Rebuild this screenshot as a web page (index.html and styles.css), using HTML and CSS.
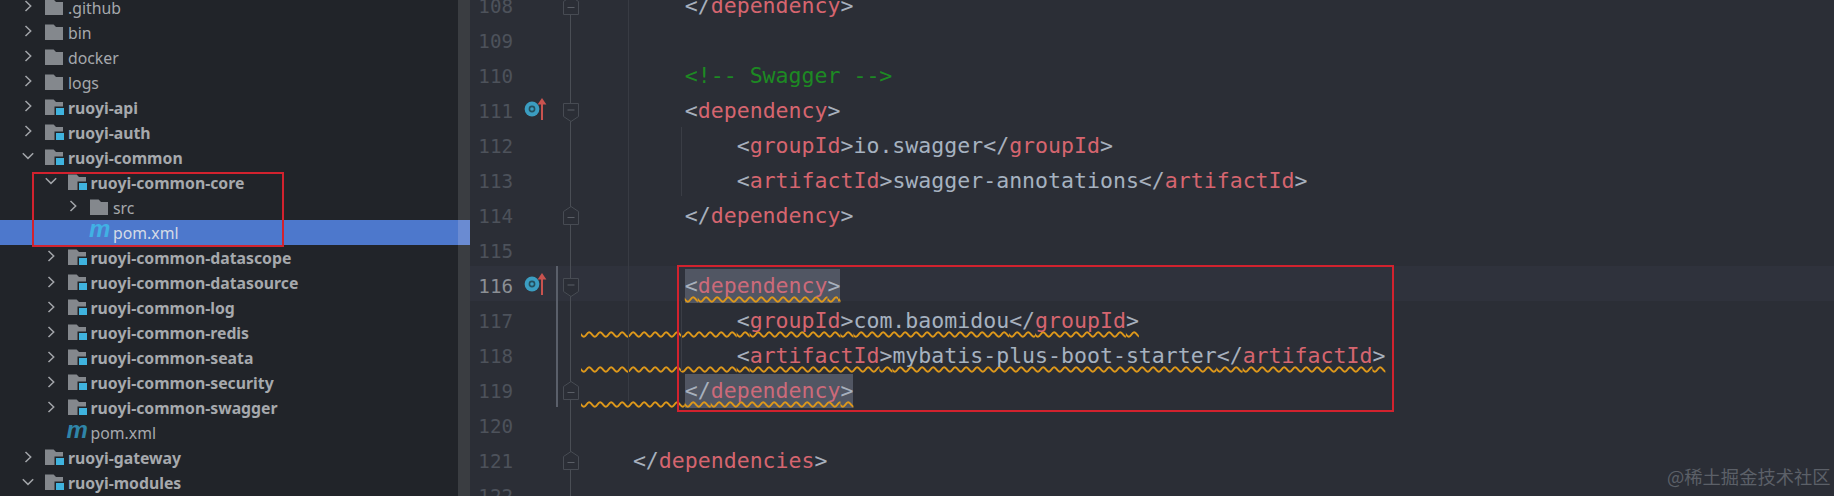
FILE: index.html
```html
<!DOCTYPE html>
<html lang="en">
<head>
<meta charset="utf-8">
<title>ruoyi-common-core pom.xml</title>
<link rel="stylesheet" href="styles.css">
</head>
<body>
<svg class="defs" width="0" height="0" aria-hidden="true">
  <symbol id="folder" viewBox="0 0 20 18"><path d="M1 2.5h8.6l2.4 2.5h7v13H1z" fill="#84888d"/></symbol>
  <symbol id="module" viewBox="0 0 20 18"><path d="M1 2.5h8.6l2.4 2.5h7v13H1z" fill="#84888d"/><rect x="10.5" y="9.5" width="10" height="10" fill="#212429"/><rect x="12" y="11" width="8" height="8" fill="#3fb3de"/></symbol>
  <symbol id="right" viewBox="0 0 12 12"><path d="M3.5 1l5.2 5-5.2 5" fill="none" stroke="#a2a5a9" stroke-width="1.5"/></symbol>
  <symbol id="down" viewBox="0 0 12 12"><path d="M.8 3.2l5.2 5.2 5.2-5.2" fill="none" stroke="#a2a5a9" stroke-width="1.5"/></symbol>
  <symbol id="fstart" viewBox="0 0 16 19"><path d="M.5.5h15v13L8 18.5.5 13.5z" fill="#2b2e36" stroke="#474b53"/><path d="M4.5 7h7" stroke="#5a5e66"/></symbol>
  <symbol id="fend" viewBox="0 0 16 19"><path d="M.5 18.5h15v-13L8 .5.5 5.5z" fill="#2b2e36" stroke="#474b53"/><path d="M4.5 11.5h7" stroke="#5a5e66"/></symbol>
  <symbol id="impl" viewBox="0 0 26 24"><circle cx="8" cy="12" r="7.4" fill="#3b9dc1"/><circle cx="8" cy="12" r="2.6" fill="none" stroke="#24505f" stroke-width="1.6"/><path d="M18 23V4" stroke="#c9534f" stroke-width="2"/><path d="M13.6 7.5L18 1l4.4 6.5z" fill="#c9534f"/></symbol>
</svg>
<main class="app">
  <aside class="tree">
    <div class="row d0"><svg class="chev"><use href="#right"/></svg><svg class="ico"><use href="#folder"/></svg><span>.github</span></div>
    <div class="row d0"><svg class="chev"><use href="#right"/></svg><svg class="ico"><use href="#folder"/></svg><span>bin</span></div>
    <div class="row d0"><svg class="chev"><use href="#right"/></svg><svg class="ico"><use href="#folder"/></svg><span>docker</span></div>
    <div class="row d0"><svg class="chev"><use href="#right"/></svg><svg class="ico"><use href="#folder"/></svg><span>logs</span></div>
    <div class="row d0 mod"><svg class="chev"><use href="#right"/></svg><svg class="ico"><use href="#module"/></svg><span>ruoyi-api</span></div>
    <div class="row d0 mod"><svg class="chev"><use href="#right"/></svg><svg class="ico"><use href="#module"/></svg><span>ruoyi-auth</span></div>
    <div class="row d0 mod"><svg class="chev"><use href="#down"/></svg><svg class="ico"><use href="#module"/></svg><span>ruoyi-common</span></div>
    <div class="row d1 mod"><svg class="chev"><use href="#down"/></svg><svg class="ico"><use href="#module"/></svg><span>ruoyi-common-core</span></div>
    <div class="row d2"><svg class="chev"><use href="#right"/></svg><svg class="ico"><use href="#folder"/></svg><span>src</span></div>
    <div class="row d2 sel"><i class="chev"></i><i class="mvn">m</i><span>pom.xml</span></div>
    <div class="row d1 mod"><svg class="chev"><use href="#right"/></svg><svg class="ico"><use href="#module"/></svg><span>ruoyi-common-datascope</span></div>
    <div class="row d1 mod"><svg class="chev"><use href="#right"/></svg><svg class="ico"><use href="#module"/></svg><span>ruoyi-common-datasource</span></div>
    <div class="row d1 mod"><svg class="chev"><use href="#right"/></svg><svg class="ico"><use href="#module"/></svg><span>ruoyi-common-log</span></div>
    <div class="row d1 mod"><svg class="chev"><use href="#right"/></svg><svg class="ico"><use href="#module"/></svg><span>ruoyi-common-redis</span></div>
    <div class="row d1 mod"><svg class="chev"><use href="#right"/></svg><svg class="ico"><use href="#module"/></svg><span>ruoyi-common-seata</span></div>
    <div class="row d1 mod"><svg class="chev"><use href="#right"/></svg><svg class="ico"><use href="#module"/></svg><span>ruoyi-common-security</span></div>
    <div class="row d1 mod"><svg class="chev"><use href="#right"/></svg><svg class="ico"><use href="#module"/></svg><span>ruoyi-common-swagger</span></div>
    <div class="row d1"><i class="chev"></i><i class="mvn">m</i><span>pom.xml</span></div>
    <div class="row d0 mod"><svg class="chev"><use href="#right"/></svg><svg class="ico"><use href="#module"/></svg><span>ruoyi-gateway</span></div>
    <div class="row d0 mod"><svg class="chev"><use href="#down"/></svg><svg class="ico"><use href="#module"/></svg><span>ruoyi-modules</span></div>
  </aside>
  <div class="scrollbar"></div>
  <section class="editor">
    <div class="guide g-fold"></div>
    <div class="guide g-outer"></div>
    <div class="guide g-inner1"></div>
    <div class="guide g-inner2"></div>
    <div class="changebar"></div>

    <div class="line"><span class="ln">108</span><span class="mark"></span><span class="fold"><svg class="fe"><use href="#fend"/></svg></span><code class="code">        <b>&lt;/</b><em>dependency</em><b>&gt;</b></code></div>
    <div class="line"><span class="ln">109</span><span class="mark"></span><span class="fold"></span><code class="code"></code></div>
    <div class="line"><span class="ln">110</span><span class="mark"></span><span class="fold"></span><code class="code">        <u>&lt;!-- Swagger --&gt;</u></code></div>
    <div class="line"><span class="ln">111</span><span class="mark"><svg class="impl"><use href="#impl"/></svg></span><span class="fold"><svg class="fs"><use href="#fstart"/></svg></span><code class="code">        <b>&lt;</b><em>dependency</em><b>&gt;</b></code></div>
    <div class="line"><span class="ln">112</span><span class="mark"></span><span class="fold"></span><code class="code">            <b>&lt;</b><em>groupId</em><b>&gt;</b>io.swagger<b>&lt;/</b><em>groupId</em><b>&gt;</b></code></div>
    <div class="line"><span class="ln">113</span><span class="mark"></span><span class="fold"></span><code class="code">            <b>&lt;</b><em>artifactId</em><b>&gt;</b>swagger-annotations<b>&lt;/</b><em>artifactId</em><b>&gt;</b></code></div>
    <div class="line"><span class="ln">114</span><span class="mark"></span><span class="fold"><svg class="fe"><use href="#fend"/></svg></span><code class="code">        <b>&lt;/</b><em>dependency</em><b>&gt;</b></code></div>
    <div class="line"><span class="ln">115</span><span class="mark"></span><span class="fold"></span><code class="code"></code></div>
    <div class="line active"><span class="ln">116</span><span class="mark"><svg class="impl"><use href="#impl"/></svg></span><span class="fold"><svg class="fs"><use href="#fstart"/></svg></span><code class="code">        <span class="warn hl"><b>&lt;</b><em>dependency</em><b>&gt;</b></span></code></div>
    <div class="line"><span class="ln">117</span><span class="mark"></span><span class="fold"></span><code class="code"><span class="warn">            <b>&lt;</b><em>groupId</em><b>&gt;</b>com.baomidou<b>&lt;/</b><em>groupId</em><b>&gt;</b></span></code></div>
    <div class="line"><span class="ln">118</span><span class="mark"></span><span class="fold"></span><code class="code"><span class="warn">            <b>&lt;</b><em>artifactId</em><b>&gt;</b>mybatis-plus-boot-starter<b>&lt;/</b><em>artifactId</em><b>&gt;</b></span></code></div>
    <div class="line"><span class="ln">119</span><span class="mark"></span><span class="fold"><svg class="fe"><use href="#fend"/></svg></span><code class="code"><span class="warn">        <span class="hl"><b>&lt;/</b><em>dependency</em><b>&gt;</b></span></span></code></div>
    <div class="line"><span class="ln">120</span><span class="mark"></span><span class="fold"></span><code class="code"></code></div>
    <div class="line"><span class="ln">121</span><span class="mark"></span><span class="fold"><svg class="fe"><use href="#fend"/></svg></span><code class="code">    <b>&lt;/</b><em>dependencies</em><b>&gt;</b></code></div>
    <div class="line"><span class="ln">122</span><span class="mark"></span><span class="fold"></span><code class="code"></code></div>
  </section>
  <div class="redbox box-tree"></div>
  <div class="redbox box-code"></div>
  <div class="watermark">@稀土掘金技术社区</div>
</main>
</body>
</html>
```

FILE: styles.css
```css
* { box-sizing: border-box; }
html, body { margin: 0; height: 100%; background: #2b2e36; overflow: hidden; }
.defs { position: absolute; }

.app { position: relative; display: flex; width: 1834px; height: 496px; overflow: hidden; }

/* Project tree */
.tree { position: relative; width: 458px; height: 501px; flex: none; margin-top: -5px; background: #212429; box-shadow: 12px 0 0 #212429; font-family: "Noto Sans", sans-serif; font-size: 15.8px; line-height: 18px; color: #a6a9ad; }
.row { display: flex; align-items: center; height: 25.05px; white-space: nowrap; }
.row.d0 { padding-left: 22px; }
.row.d1 { padding-left: 44.5px; }
.row.d2 { padding-left: 67px; }
.row.sel { background: #4d78cc; color: #d5dbe6; width: 470px; position: relative; }
.mod { font-weight: 700; }
.chev { width: 12px; height: 12px; flex: none; margin-top: -3px; }
.ico { width: 20px; height: 18px; margin: -4px 4px 0 10px; flex: none; }
.mvn { width: 20px; height: 25px; margin: -8px 4px 0 10px; flex: none; font: italic 700 24px/25px "Liberation Sans", sans-serif; color: #2f85a8; letter-spacing: -1px; }
.sel .mvn { color: #41b1e4; }

.scrollbar { width: 12px; flex: none; background: #3a3d41; position: relative; }
.scrollbar::after { content: ""; position: absolute; top: 220px; left: 0; width: 100%; height: 25px; background: #6a8bd2; }

/* Editor */
.editor { position: relative; flex: 1; height: 510px; margin-top: -14px; background: #2b2e36; font-family: "DejaVu Sans Mono", monospace; font-size: 21.55px; overflow: hidden; }
.line { display: flex; height: 35px; line-height: 35px; white-space: pre; }
.line.active { background: #2f323c; }
.ln { width: 43px; flex: none; text-align: right; color: #4d525b; font-size: 19.2px; padding-top: 3px; }
.active .ln { color: #8b8f95; }
.mark { width: 50px; flex: none; padding-left: 11px; }
.impl { display: block; width: 26px; height: 24px; margin-top: 6px; }
.fold { width: 16px; flex: none; }
.fold svg { position: relative; z-index: 1; display: block; width: 16px; height: 19px; }
.fs { margin-top: 12px; }
.fe { margin-top: 10px; }
.code { margin-left: 2px; padding-top: 2px; font: inherit; color: #a6b2c0; }
.code b { font-weight: 400; color: #a7b0bd; }
.code em { font-style: normal; color: #d5656f; }
.code .hl em { color: #cc6a7a; }
.code u { text-decoration: none; color: #1d8a23; }
.hl { background: #515663; padding: 4px 0 5px; }
.warn { text-decoration: underline wavy #de981a 1.8px; text-underline-offset: 3px; text-decoration-skip-ink: none; }

.guide { position: absolute; width: 1px; top: 0; }
.g-fold { left: 100px; height: 100%; background: #4a4e55; }
.g-outer { left: 158px; height: 415px; background: #383b43; }
.g-inner1 { left: 211px; top: 141px; height: 69px; background: #3a3d45; }
.g-inner2 { left: 211px; top: 315px; height: 70px; background: #3a3d45; }
.changebar { position: absolute; left: 86px; top: 280px; width: 2px; height: 141px; background: #5a5f6a; z-index: 1; }

/* Overlays */
.redbox { position: absolute; border: 2px solid #d2222e; z-index: 2; }
.box-tree { left: 32px; top: 172px; width: 252px; height: 75px; }
.box-code { left: 677px; top: 265px; width: 717px; height: 147px; }
.watermark { position: absolute; left: 1667px; top: 463px; font: 18.3px/26px "Noto Sans CJK SC", "Noto Sans", sans-serif; color: #5c6068; white-space: nowrap; }
```
